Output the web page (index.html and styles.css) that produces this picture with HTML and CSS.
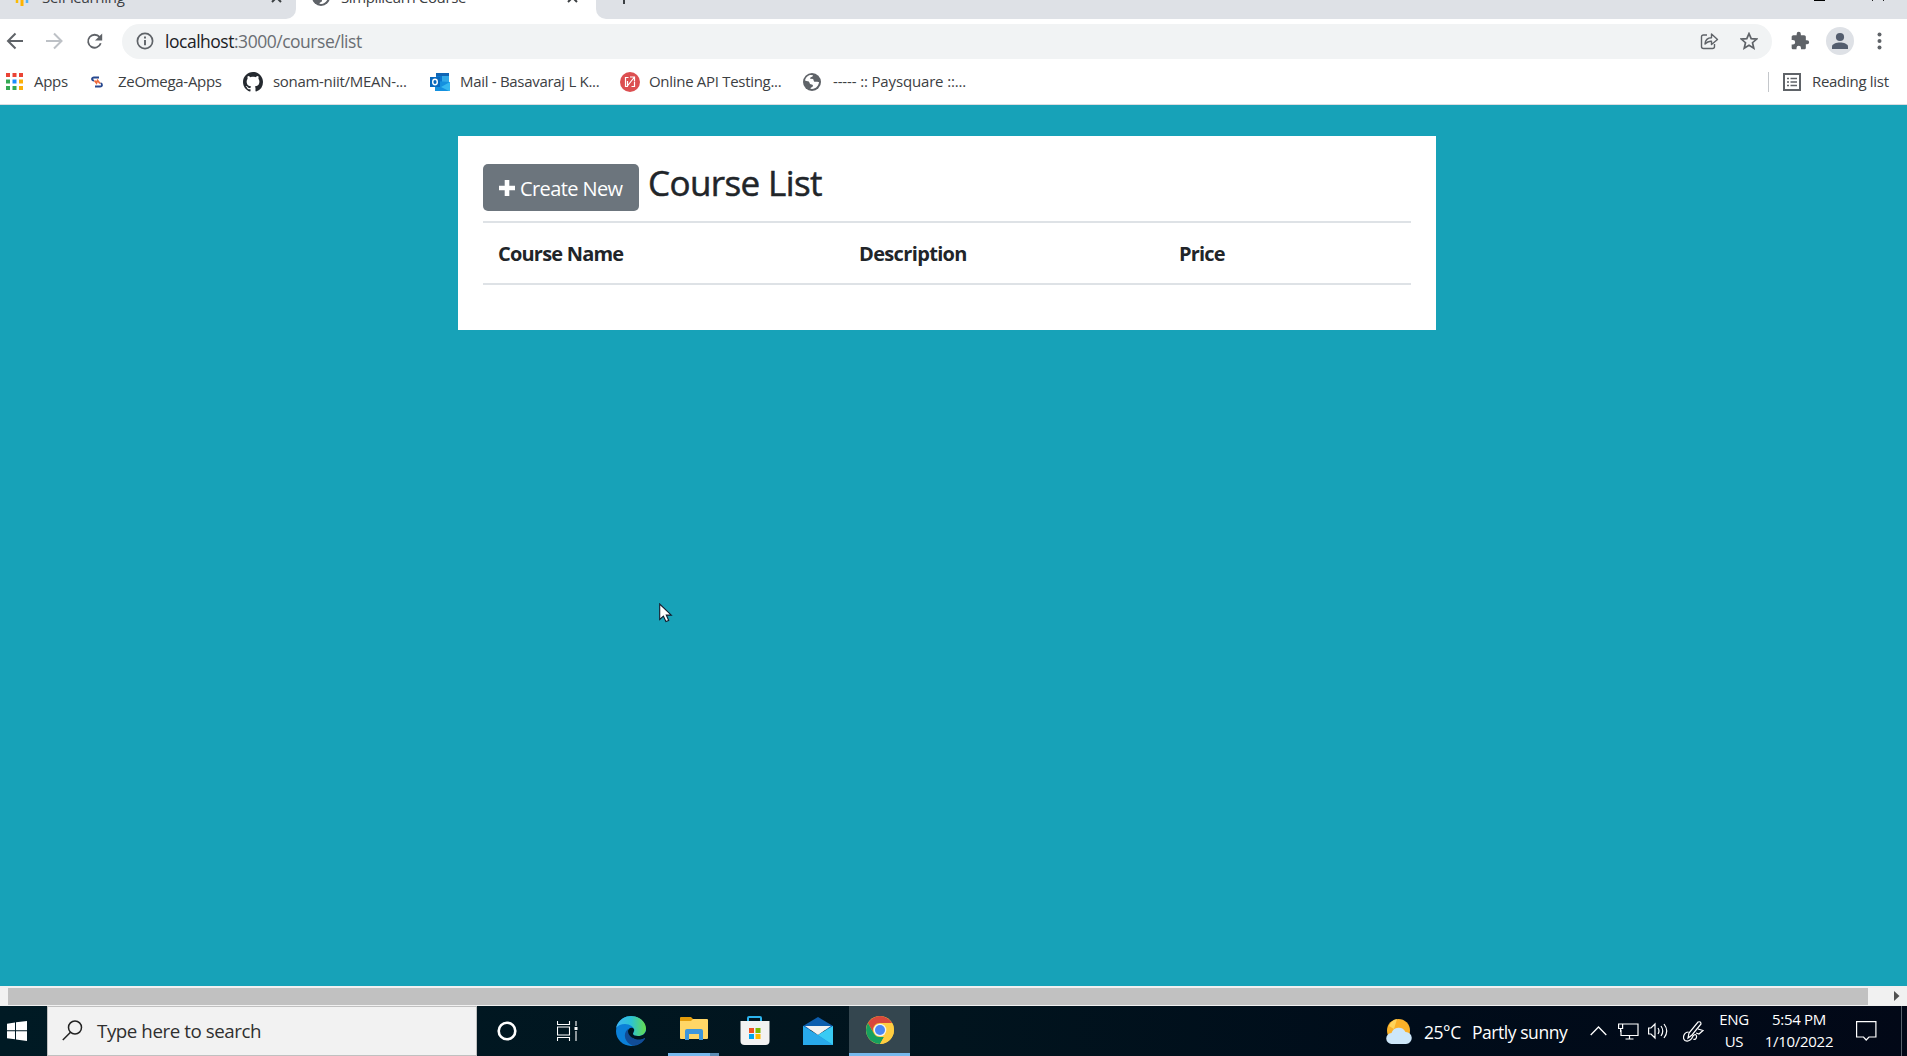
FILE: index.html
```html
<!DOCTYPE html>
<html lang="en">
<head>
<meta charset="utf-8">
<title>Simplilearn Course</title>
<link rel="stylesheet" href="styles.css">
</head>
<body>
<svg class="defs" width="0" height="0" aria-hidden="true">
  <symbol id="globe" viewBox="0 0 18 18"><circle cx="9" cy="9" r="9" fill="#5f6368"/><path d="M2 7.5C2.500 4.500 5 2 8 2l2 .3c-.2 1.700-1.500 1.600-2.500 2.100-.8.500-.3 1.700.8 1.500 1.600-.3 2.200.4 2.400 1.800.3 1.300 1.800 1.300 3 1 .9-.2 1.700.1 2.300.4C15.800 12.600 12.900 16 9 16l-1.500-.2c-.1-1.300 1-1.500 2-2.100 1-.8.4-2.200-.8-2.300-1.500 0-2-.8-2.300-2C6 8 4 8.300 2 7.500z" fill="#fff"/></symbol>
</svg>

<div class="tabs">
  <div class="tab tab-idle">
    <svg class="tab-icon" width="18" height="18" viewBox="0 0 18 18"><path d="M3 6v9" stroke="#fbbc04" stroke-width="2.500"/><path d="M8 3v15" stroke="#ffb300" stroke-width="3"/><path d="M13 4v11" stroke="#4fb3f5" stroke-width="2.500"/></svg>
    <span class="tab-title">Self learning</span>
    <svg class="tab-close" width="11" height="11" viewBox="0 0 11 11"><path d="M1 1l9 9M10 1l-9 9" stroke="#3c4043" stroke-width="2"/></svg>
  </div>
  <div class="tab tab-active">
    <svg class="tab-icon" width="18" height="18"><use href="#globe"/></svg>
    <span class="tab-title">Simplilearn Course</span>
    <svg class="tab-close" width="11" height="11" viewBox="0 0 11 11"><path d="M1 1l9 9M10 1l-9 9" stroke="#3c4043" stroke-width="2"/></svg>
  </div>
  <div class="tab-rest">
    <span class="new-tab"></span>
    <span class="minimize"></span>
    <svg width="14" height="2" viewBox="0 0 14 2"><path d="M2 0L1 1M12 0l1 1" stroke="#222"/></svg>
  </div>
</div>

<div class="toolbar">
  <svg width="18" height="18" viewBox="0 0 18 18" fill="none" stroke="#5f6368" stroke-width="2"><path d="M17 9H2M9.500 1.500L2 9l7.500 7.500"/></svg>
  <svg width="18" height="18" viewBox="0 0 18 18" fill="none" stroke="#bdc1c6" stroke-width="2"><path d="M0 9h15M8 1.500L15.500 9 8 16.500"/></svg>
  <svg width="18" height="17" viewBox="0 0 20 18"><path d="M15.200 4.200A7.200 7.200 0 1 0 16.400 11" fill="none" stroke="#5f6368" stroke-width="2"/><path d="M18 0v8h-8z" fill="#5f6368"/></svg>
  <div class="omnibox">
    <svg width="18" height="18" viewBox="0 0 18 18"><circle cx="9" cy="9" r="7.600" fill="none" stroke="#5f6368" stroke-width="1.700"/><path d="M9 8v5.200M9 4.600v2" stroke="#5f6368" stroke-width="1.900"/></svg>
    <span class="url"><b>localhost</b>:3000/course/list</span>
    <svg width="19" height="18" viewBox="0 0 19 18" fill="none" stroke="#5f6368" stroke-width="1.400" stroke-linejoin="round"><path d="M7 3H3.500Q1.500 3 1.500 5v9.500q0 2 2 2h9q2 0 2-2V12"/><path d="M5 12c.3-4 3-6.300 6.500-6.300V2l6 5.500-6 5V9.300C9 9 7 10 5 12z"/></svg>
    <svg width="18" height="18" viewBox="0 0 18 18"><path d="M9 1.600l2.200 5 5.500.5-4.200 3.600 1.300 5.500L9 13.300l-4.800 2.900 1.300-5.500L1.300 7.100l5.500-.5z" fill="none" stroke="#5f6368" stroke-width="1.700"/></svg>
  </div>
  <svg width="20" height="20" viewBox="0 0 24 24"><path fill="#5f6368" d="M20.500 11H19V7c0-1.100-.9-2-2-2h-4V3.500a2.500 2.500 0 0 0-5 0V5H4c-1.100 0-2 .9-2 2v3.800h1.500a2.700 2.700 0 0 1 0 5.400H2V20c0 1.100.9 2 2 2h3.800v-1.500a2.700 2.700 0 0 1 5.400 0V22H17c1.100 0 2-.9 2-2v-4h1.500a2.500 2.500 0 0 0 0-5z"/></svg>
  <svg width="28" height="28" viewBox="0 0 28 28"><circle cx="14" cy="14" r="14" fill="#dee1e6"/><circle cx="14" cy="10" r="4.100" fill="#535d6e"/><path d="M6 22v-2.500c0-2.500 4.500-4 8-4s8 1.500 8 4V22z" fill="#535d6e"/></svg>
  <svg width="5" height="18" viewBox="0 0 5 18" fill="#5f6368"><circle cx="2.500" cy="2.500" r="2"/><circle cx="2.500" cy="9" r="2"/><circle cx="2.500" cy="15.500" r="2"/></svg>
</div>

<div class="bookmarks">
  <svg width="17" height="17" viewBox="0 0 17 17"><path d="M0 0h4v4H0zM6.500 0h4v4h-4zM13 0h4v4h-4z" fill="#ea4335"/><path d="M0 6.500h4v4H0zM0 13h4v4H0zM6.500 13h4v4h-4z" fill="#34a853"/><path d="M6.500 6.500h4v4h-4z" fill="#1a8cff"/><path d="M13 6.500h4v4h-4zM13 13h4v4h-4z" fill="#fbaf08"/></svg>
  <span>Apps</span>
  <svg width="12" height="12" viewBox="0 0 12 12" fill="none"><path d="M8 1.500H3Q1 1.500 1 3t2 1.500" stroke="#27488f" stroke-width="1.800"/><path d="M9.500 7q1.500.5 1.500 2T9 10.500H4" stroke="#27488f" stroke-width="1.800"/><path d="M3.500 4.500l2 2.500 1-2.500 2.500 3" stroke="#ee6a3c" stroke-width="1.800"/></svg>
  <span>ZeOmega-Apps</span>
  <svg width="20" height="20" viewBox="0 0 16 16"><path fill="#24292f" d="M8 0C3.580 0 0 3.580 0 8c0 3.540 2.290 6.530 5.470 7.590.4.070.55-.17.55-.38 0-.19-.01-.82-.01-1.490-2.010.37-2.530-.49-2.690-.94-.09-.23-.48-.94-.82-1.130-.28-.15-.68-.52-.01-.53.63-.01 1.080.58 1.230.82.72 1.210 1.870.87 2.330.66.07-.52.28-.87.51-1.070-1.780-.2-3.640-.89-3.640-3.950 0-.87.31-1.590.82-2.150-.08-.2-.36-1.020.08-2.120 0 0 .67-.21 2.200.82.64-.18 1.320-.27 2-.27s1.360.09 2 .27c1.530-1.040 2.200-.82 2.200-.82.44 1.100.16 1.920.08 2.120.51.56.82 1.270.82 2.150 0 3.070-1.870 3.750-3.650 3.950.29.25.54.73.54 1.480 0 1.070-.01 1.930-.01 2.200 0 .21.15.46.55.38A8.010 8.010 0 0 0 16 8c0-4.420-3.580-8-8-8z"/></svg>
  <span>sonam-niit/MEAN-...</span>
  <svg width="20" height="18" viewBox="0 0 20 18"><path d="M6 0h13v9H6z" fill="#1066b5"/><path d="M12 3h7v6h-7z" fill="#32a9e7"/><path d="M6 3h6v6H6z" fill="#0a76d0"/><path d="M5 8l15 1v9H5z" fill="#1490df"/><path d="M20 9l-9 5 8 4h1z" fill="#35b8f1"/><path d="M0 4h10v10H0z" fill="#0868bd"/><ellipse cx="5" cy="9" rx="2.300" ry="2.700" fill="none" stroke="#fff" stroke-width="1.400"/></svg>
  <span>Mail - Basavaraj L K...</span>
  <svg width="20" height="20" viewBox="0 0 20 20"><circle cx="10" cy="10" r="10" fill="#dc4f51"/><path d="M8.500 5.500H5.500v9H8M11.500 14.500h3v-5M7 14.500L14.500 5M10 5h4.500v4M7.500 9v5.500" fill="none" stroke="#fff" stroke-width="1.200"/></svg>
  <span>Online API Testing...</span>
  <svg width="18" height="18"><use href="#globe"/></svg>
  <span class="paysquare">----- :: Paysquare ::...</span>
  <i class="divider"></i>
  <svg width="18" height="18" viewBox="0 0 18 18"><path d="M1 1h16v16H1z" fill="none" stroke="#5f6368" stroke-width="2"/><path d="M4 5.500h2M4 9h2M4 12.500h2M7.500 5.500H14M7.500 9H14M7.500 12.500H14" stroke="#5f6368" stroke-width="1.500"/></svg>
  <span>Reading list</span>
</div>

<main class="page">
  <section class="card">
    <div class="heading">
      <button class="create"><svg width="16" height="16" viewBox="0 0 16 16"><path d="M8 0v16M0 8h16" stroke="#fff" stroke-width="4.600"/></svg><span>Create New</span></button>
      <h3>Course List</h3>
    </div>
    <table class="courses">
      <thead><tr><th>Course Name</th><th>Description</th><th>Price</th></tr></thead>
    </table>
  </section>
  <svg class="cursor" width="14" height="20" viewBox="0 0 14 20"><path d="M.7 1v15.500l3.700-3.400 2.500 5.500 2.800-1.200-2.400-5.300h5z" fill="#fff" stroke="#111a2b" stroke-width="1.100"/></svg>
</main>

<div class="scrollbar">
  <div class="thumb"></div>
  <svg width="6" height="10" viewBox="0 0 6 10"><path d="M0 0l5.500 5L0 10z" fill="#505050"/></svg>
</div>

<footer class="taskbar">
  <svg class="start" width="20" height="20" viewBox="0 0 20 20"><path d="M0 2.800L8 1.500V9.300H0zM9 1.300L20 0v9.300H9zM0 10.300h8v8L0 17.200zM9 10.300h11V20L9 18.500z" fill="#fff"/></svg>
  <div class="search">
    <svg width="21" height="21" viewBox="0 0 21 21" fill="none" stroke="#222" stroke-width="1.500"><circle cx="13" cy="7.500" r="6.500"/><path d="M8.500 12.200L.8 20"/></svg>
    <span>Type here to search</span>
  </div>
  <div class="app cortana"><svg width="20" height="20" viewBox="0 0 20 20"><circle cx="10" cy="10" r="8.300" fill="none" stroke="#fff" stroke-width="2.600"/></svg></div>
  <div class="app view"><svg width="21" height="20" viewBox="0 0 21 20" fill="none" stroke="#fff" stroke-width="1.100"><path d="M.5 0v3.500h12V0M.5 6h12v8H.5zM.5 20v-3.500h12V20M19 0v5M19 10v10"/><path d="M17.500 6h3v3h-3z" fill="#fff" stroke="none"/></svg></div>
  <div class="app edge"><svg width="30" height="30" viewBox="0 0 30 30">
    <defs><linearGradient id="edgeTop" x1="0" x2="1"><stop offset="0" stop-color="#3db5f5"/><stop offset=".5" stop-color="#2cc3d4"/><stop offset="1" stop-color="#66dc4c"/></linearGradient></defs>
    <circle cx="15" cy="15" r="15" fill="#0b80d8"/><path d="M0 12C1.500 5 7.500 0 15 0c8.500 0 15 6 15 12.500 0 5-4 7.500-8 7.500-3 0-5-1-5-2.300 0-.8 1.300-1.500 1.300-3.200C18.300 11 14 8 9 8c-4 0-7 1.500-9 4z" fill="url(#edgeTop)"/>
    <path d="M12 13c-6 5-3 14 5 16.700 5.500 0 10-3.200 12-7.200-4 2-9 2-12.500-1C14 19.500 12 16.500 12 13z" fill="#114c96"/><path d="M17 17.700c0 1.300 2 2.300 5 2.300 4 0 7-2 8-5v7l-1.500.5C22 26 12 22 12 15c0-3 4-4.500 6-2 .8 1.700-1 3.500-1 4.700z" fill="#01141e"/><path d="M16.500 21.500c3.500 3 8.500 3 12 .5.500-.3.800.3.500.8L25 27c-4 1-8-2-8.500-5.500z" fill="#114c96"/></svg></div>
  <div class="app folder"><svg width="28" height="25" viewBox="0 0 28 25"><path d="M0 1q0-1 1-1h10l2 2v5H0z" fill="#e39c0b"/><path d="M0 4h11l2-2h14q1 0 1 1v18q0 1-1 1H1q-1 0-1-1z" fill="#ffd666"/><path d="M5 14q0-2 2-2h14q2 0 2 2v9h-4v-6H9v6H5z" fill="#3c96db"/></svg></div>
  <div class="app store"><svg width="30" height="30" viewBox="0 0 30 30"><path d="M8 6V2q0-1 1-1h11q1 0 1 1v4" fill="none" stroke="#2cb4ee" stroke-width="2"/><path d="M.5 5h29v20q0 4-4 4h-21q-4 0-4-4z" fill="#f2f2f2"/><path d="M9 12h5v5H9z" fill="#f25022"/><path d="M15.500 12h5v5h-5z" fill="#7fba00"/><path d="M9 18h5v5H9z" fill="#00a4ef"/><path d="M15.500 18h5v5h-5z" fill="#ffb900"/></svg></div>
  <div class="app mail"><svg width="30" height="28" viewBox="0 0 30 28"><path d="M0 9L15 0l15 9v4H0z" fill="#0d5eae"/><path d="M0 9l15 9 15-9v19H0z" fill="#1b9de2"/><path d="M2 9h26l-13 9z" fill="#f2f2f2"/><path d="M30 9v19L15 18z" fill="#39cbf4"/><path d="M0 28V9l30 19z" fill="#28a9ea"/></svg></div>
  <div class="app chrome"><svg width="28" height="28" viewBox="0 0 28 28"><circle cx="14" cy="14" r="14" fill="#ffcd40"/><path d="M1.900 7A14 14 0 0 1 26.100 7H14a7 7 0 0 0-6.100 10.500z" fill="#d9483b"/><path d="M1.900 7l6 10.500A7 7 0 0 0 14 21h4l-4 7A14 14 0 0 1 1.900 7z" fill="#17a05e"/><path d="M20.100 17.500L14 28a14 14 0 0 0 12.100-21H14z" fill="#ffcd40"/><circle cx="14" cy="14" r="6.300" fill="#f3f3f3"/><circle cx="14" cy="14" r="5" fill="#4a87f3"/></svg></div>
  <div class="tray">
    <svg width="26" height="25" viewBox="0 0 26 25"><circle cx="12.500" cy="11.500" r="11.500" fill="#fbb128"/><path d="M3 7a11 11 0 0 1 8-7L8 10z" fill="#ffd45b"/><path d="M6 25a5.500 5.500 0 0 1-.5-11A7.500 7.500 0 0 1 19.500 13 6 6 0 0 1 20 25z" fill="#cde7fa"/></svg>
    <span class="weather">25°C</span>
    <span class="weather">Partly sunny</span>
    <svg width="17" height="10" viewBox="0 0 17 10"><path d="M.7 9l7.800-8 7.800 8" fill="none" stroke="#fff" stroke-width="1.300"/></svg>
    <svg width="21" height="17" viewBox="0 0 21 17" fill="none" stroke="#fff" stroke-width="1.200"><path d="M5 1h15v11.500H3V7M11.500 12.500V16M7.500 16h8M.6 1h4v4.500h-4zM2.600 5.500V9"/></svg>
    <svg width="21" height="18" viewBox="0 0 21 18" fill="none" stroke="#fff" stroke-width="1.200"><path d="M.6 6H3l4-4v14l-4-4H.6zM10 6q2 3 0 6M13 4q3.500 5 0 10M16 2q5.500 7 0 14"/></svg>
    <svg width="21" height="21" viewBox="0 0 21 21" fill="none" stroke="#fff" stroke-width="1.200"><path d="M5 17l1-5 9-11q3-1 3 2L9 14zM5.500 11C1 11-1 17 2 19.500c4 2 7-2 7.500-3.500s3.500-4 4-1-2 4-3 3M15 8l5 1.500-4 3.500-3-1"/></svg>
    <div class="stack"><span>ENG</span><span>US</span></div>
    <div class="stack clock"><span>5:54 PM</span><span>1/10/2022</span></div>
    <svg width="21" height="20" viewBox="0 0 21 20"><path d="M.6.6h19.300v15.400H13l-2.800 3L7.500 16H.6z" fill="none" stroke="#fff" stroke-width="1.200"/></svg>
    <i class="peek"></i>
  </div>
</footer>
</body>
</html>
```
FILE: styles.css
```css
* { box-sizing: border-box; }

body {
  margin: 0;
  width: 1907px;
  height: 1056px;
  overflow: hidden;
  display: flex;
  flex-direction: column;
  font-family: "Open Sans", "Noto Sans", sans-serif;
  font-size: 15px;
  letter-spacing: -0.3px;
  color: #3c4043;
  background: #fff;
}

svg { display: block; flex: none; }
.defs { position: absolute; }
span { white-space: nowrap; }

/* Tab strip, scrolled partly past the top edge */
.tabs { display: flex; height: 19px; flex: none; overflow: hidden; }
.tab {
  display: grid;
  grid-template-columns: 18px 1fr 11px;
  align-items: center;
  height: 44px;
  margin-top: -25px;
}
.tab-idle { width: 296px; column-gap: 10px; padding: 0 14px; background: #dee1e6; border-bottom-right-radius: 10px; }
.tab-active { width: 300px; column-gap: 11px; padding: 0 18px 0 16px; letter-spacing: -0.38px; }
.tab-close { margin-top: 1px; }
.tab-title { margin-top: -1px; }
.tab-rest {
  display: flex;
  flex: 1;
  background: #dee1e6;
  border-bottom-left-radius: 10px;
}
.new-tab { width: 2px; height: 4px; margin-left: 27px; background: #3c4043; }
.minimize { width: 11px; height: 1px; margin: 0 46px 0 1189px; background: #000; }

/* Address bar */
.toolbar {
  display: grid;
  grid-template-columns: 40px 40px 36px 1668px 36px 51px 5px;
  align-items: center;
  height: 45px;
  flex: none;
  padding: 0 0 1px 6px;
}
.omnibox {
  display: grid;
  grid-template-columns: 29px 1535px 40px 18px;
  align-items: center;
  width: 1650px;
  height: 35px;
  padding-left: 14px;
  border-radius: 18px;
  background: #f1f3f4;
}
.url { font-size: 17.5px; letter-spacing: -0.48px; color: #6a6e73; }
.url b { font-weight: 400; color: #202124; }

/* Bookmark bar */
.bookmarks {
  display: grid;
  grid-template-columns: 28px 57px 27px 125px 30px 157px 30px 160px 29px 154px 30px 935px 15px 29px 90px;
  align-items: center;
  height: 41px;
  flex: none;
  padding: 0 0 5px 6px;
  border-bottom: 1px solid #dadce0;
}
.bookmarks > span { margin-top: -1px; }
.bookmarks .paysquare { letter-spacing: -0.15px; }
.divider { width: 1px; height: 20px; background: #c4c7cb; }

/* Course page */
.page {
  position: relative;
  height: 881px;
  flex: none;
  padding: 31px 471px 0 458px;
  background: #17a2b8;
  color: #212529;
}
.card { height: 194px; padding: 28px 25px 0; background: #fff; }
.heading { display: flex; gap: 9px; height: 57px; }
.create {
  display: flex;
  align-items: center;
  gap: 5px;
  width: 156px;
  height: 47px;
  padding: 1px 0 0 16px;
  border: 0;
  border-radius: 5px;
  background: #6c757d;
  color: #fff;
  font: 400 20px "Open Sans", sans-serif;
  letter-spacing: -0.6px;
}
.create svg { margin-top: -1px; }
h3 { margin: -5px 0 0; font-size: 35px; font-weight: 500; line-height: 48px; letter-spacing: -0.6px; -webkit-text-stroke: 0.5px currentColor; }
.courses {
  width: 928px;
  border-collapse: collapse;
  table-layout: fixed;
  border-top: 2px solid #dee2e6;
  border-bottom: 2px solid #dee2e6;
}
th {
  height: 62px;
  padding: 0 15px;
  text-align: left;
  font-size: 20px;
  font-weight: 700;
  letter-spacing: -0.8px;
}
th:nth-child(1) { width: 361px; }
th:nth-child(2) { width: 320px; letter-spacing: -0.65px; }
.cursor { position: absolute; left: 659px; top: 498px; }

/* Horizontal scrollbar */
.scrollbar {
  display: flex;
  align-items: center;
  height: 20px;
  flex: none;
  padding-left: 8px;
  background: #f1f1f1;
}
.thumb { width: 1860px; height: 17px; margin-right: 26px; margin-top: 1px; background: #c1c1c1; }

/* Taskbar */
.taskbar {
  display: flex;
  align-items: center;
  height: 50px;
  flex: none;
  background: linear-gradient(90deg, #001a24 0, #01141e 50%, #000c1a 75%, #020817 100%);
}
.start { margin: 0 20px 0 7px; }
.search {
  display: flex;
  align-items: center;
  gap: 14px;
  width: 430px;
  height: 50px;
  padding: 0 0 2px 14px;
  background: #f2f2f2;
  border: 1px solid #c0c0c0;
  color: #2f2f2f;
  font-size: 18.75px;
  letter-spacing: -0.45px;
}
.app { display: flex; align-items: center; justify-content: center; height: 50px; }
.cortana { width: 60px; }
.view { width: 60px; }
.edge { width: 68px; }
.folder {
  width: 51px;
  margin: 0 5px 0 3px;
  border-bottom: 3px solid #76b9ed;
  border-image: linear-gradient(90deg, #76b9ed 40px, #5c8db4 40px) 3;
}
.store { width: 51px; margin-left: 5px; }
.mail { width: 62px; margin-left: 7px; }
.chrome { width: 61px; background: #34464f; border-bottom: 3px solid #76b9ed; }
.chrome svg { margin-top: 1px; }
.tray {
  display: grid;
  grid-template-columns: 38px 48px 118px 28px 30px 35px 36px 37px 100px 45px 1px;
  align-items: center;
  width: 521px;
  height: 50px;
  margin-left: auto;
  color: #fff;
}
.weather { font-size: 17.5px; letter-spacing: -0.45px; padding-top: 1px; }
.stack { display: flex; flex-direction: column; align-items: center; line-height: 22px; width: 30px; padding-bottom: 2px; }
.clock { width: 70px; margin-left: 8px; }
.peek { width: 1px; height: 50px; background: #59606b; }
```
